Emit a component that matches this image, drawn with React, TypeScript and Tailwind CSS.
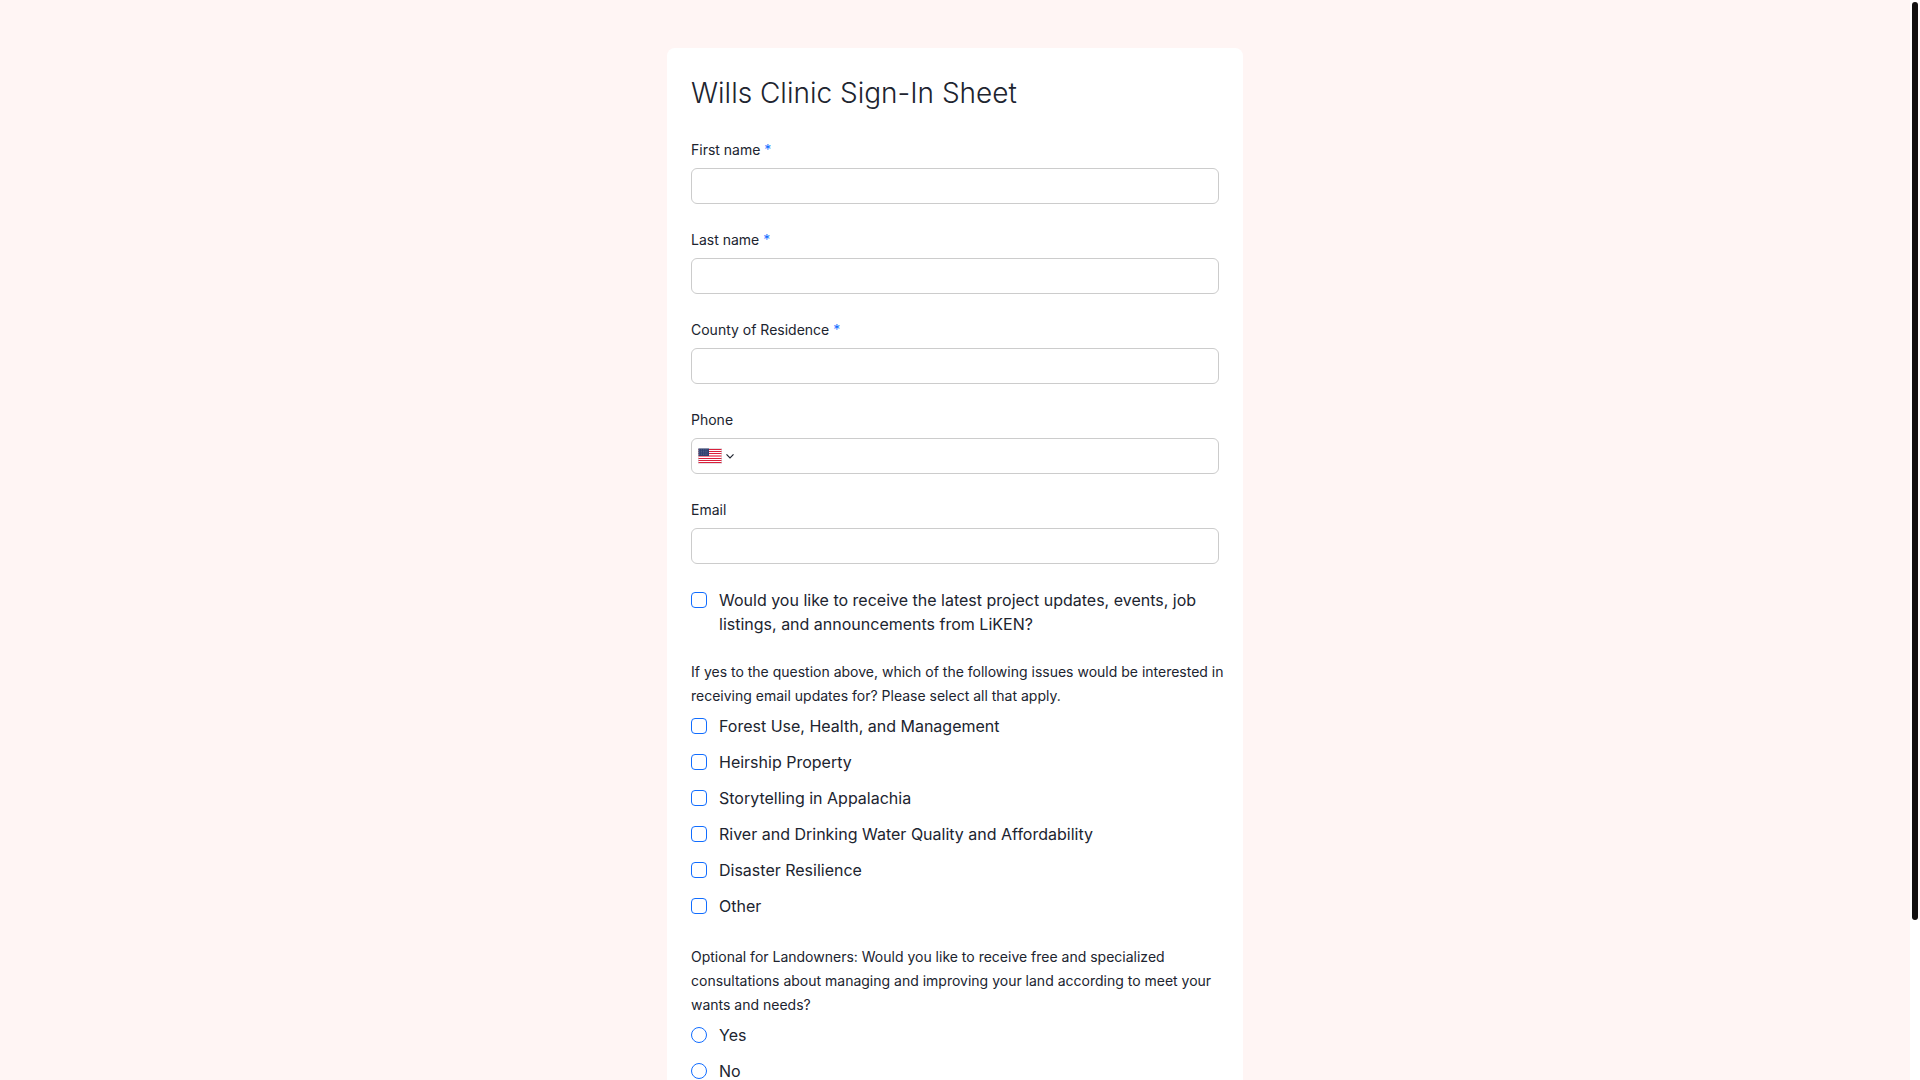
import { useState } from "react";

const ISSUES = [
  "Forest Use, Health, and Management",
  "Heirship Property",
  "Storytelling in Appalachia",
  "River and Drinking Water Quality and Affordability",
  "Disaster Resilience",
  "Other",
];

const inputClass =
  "h-9 w-full rounded-md border border-[#cccccc] bg-white px-3 text-base outline-none focus:border-[#116dff]";

interface TextFieldProps {
  id: string;
  label: string;
  type?: string;
  required?: boolean;
}

function TextField({ id, label, type = "text", required }: TextFieldProps) {
  return (
    <div className="flex flex-col gap-1.5">
      <label htmlFor={id} className="text-sm leading-6">
        {label}
        {required && <span className="text-[#116dff]"> *</span>}
      </label>
      <input id={id} name={id} type={type} required={required} className={inputClass} />
    </div>
  );
}

function UsFlag() {
  return (
    <svg width="24" height="16" viewBox="0 0 24 16" aria-hidden="true">
      <rect width="24" height="16" fill="#e3dfe4" />
      <rect x="1" y="1" width="22" height="14" fill="#fff" />
      {[1, 3, 5, 10, 12, 14].map((y) => (
        <rect key={y} x="0.5" y={y} width="23" height="1" fill="#d9203b" />
      ))}
      {/* middle stripes fall between pixel rows */}
      <rect x="0.5" y="7" width="23" height="2" fill="#ee8090" />
      <rect x="0.5" y="0.5" width="10.5" height="7.5" fill="#2f4170" />
      {[1.8, 3.4, 5, 6.6].map((y) => (
        <path key={y} d={`M1.4 ${y}H10.2`} stroke="#8b96b3" strokeWidth="0.5" strokeDasharray="0.7 1.1" />
      ))}
    </svg>
  );
}

function PhoneField() {
  return (
    <div className="flex flex-col gap-1.5">
      <label htmlFor="phone" className="text-sm leading-6">
        Phone
      </label>
      <div className="flex h-9 items-center rounded-md border border-[#cccccc] bg-white pl-1.5 focus-within:border-[#116dff]">
        <div className="relative flex items-center gap-1">
          <UsFlag />
          <svg width="8" height="6" viewBox="0 0 8 6" fill="none" stroke="#20242f" strokeWidth="1.2" aria-hidden="true">
            <path d="M0.5 1.3L4 4.8L7.5 1.3" />
          </svg>
          <select aria-label="Country code" className="absolute inset-0 w-full cursor-pointer opacity-0">
            <option>US</option>
          </select>
        </div>
        <input id="phone" name="phone" type="tel" className="h-full min-w-0 flex-1 px-3 outline-none" />
      </div>
    </div>
  );
}

interface ChoiceProps {
  type: "checkbox" | "radio";
  name: string;
  label: string;
}

function Choice({ type, name, label }: ChoiceProps) {
  return (
    <label className="flex items-start gap-3 text-base leading-6">
      <input
        type={type}
        name={name}
        value={label}
        className={
          "mt-1 size-4 shrink-0 appearance-none border border-[#116dff] bg-white checked:bg-[#116dff] " +
          (type === "radio" ? "rounded-full" : "rounded")
        }
      />
      <span>{label}</span>
    </label>
  );
}

export default function App() {
  const [scroll, setScroll] = useState(0);

  return (
    <div className="flex h-screen bg-white font-['Inter',sans-serif] text-[#20242f]">
      <main
        onScroll={(e) => setScroll(e.currentTarget.scrollTop / e.currentTarget.scrollHeight)}
        className="flex-1 overflow-y-auto bg-[#fff5f4] px-4 py-12 [scrollbar-width:none]"
      >
        <form className="mx-auto flex min-h-full max-w-xl flex-col gap-6 rounded-lg bg-white px-6 pt-6 pb-24">
          <h1 className="text-[28px] leading-[42px] font-[350]">Wills Clinic Sign-In Sheet</h1>
          <TextField id="first-name" label="First name" required />
          <TextField id="last-name" label="Last name" required />
          <TextField id="county" label="County of Residence" required />
          <PhoneField />
          <TextField id="email" label="Email" type="email" />
          <Choice
            type="checkbox"
            name="updates"
            label="Would you like to receive the latest project updates, events, job listings, and announcements from LiKEN?"
          />
          <fieldset className="-mr-3">
            <legend className="mb-1.5 text-sm leading-6">
              If yes to the question above, which of the following issues would be interested in receiving email
              updates for? Please select all that apply.
            </legend>
            <div className="flex flex-col gap-3">
              {ISSUES.map((issue) => (
                <Choice key={issue} type="checkbox" name="issues" label={issue} />
              ))}
            </div>
          </fieldset>
          <fieldset className="mt-[3px]">
            <legend className="mb-1.5 text-sm leading-6">
              Optional for Landowners: Would you like to receive free and specialized consultations about managing and
              improving your land according to meet your wants and needs?
            </legend>
            <div className="flex flex-col gap-3">
              <Choice type="radio" name="consultation" label="Yes" />
              <Choice type="radio" name="consultation" label="No" />
            </div>
          </fieldset>
        </form>
      </main>
      <div className="w-2.5 shrink-0 bg-white px-0.5" aria-hidden="true">
        <div className="relative mt-0.5 h-[85%] w-1.5 rounded-full bg-[#111111]" style={{ top: `${scroll * 100}%` }} />
      </div>
    </div>
  );
}
